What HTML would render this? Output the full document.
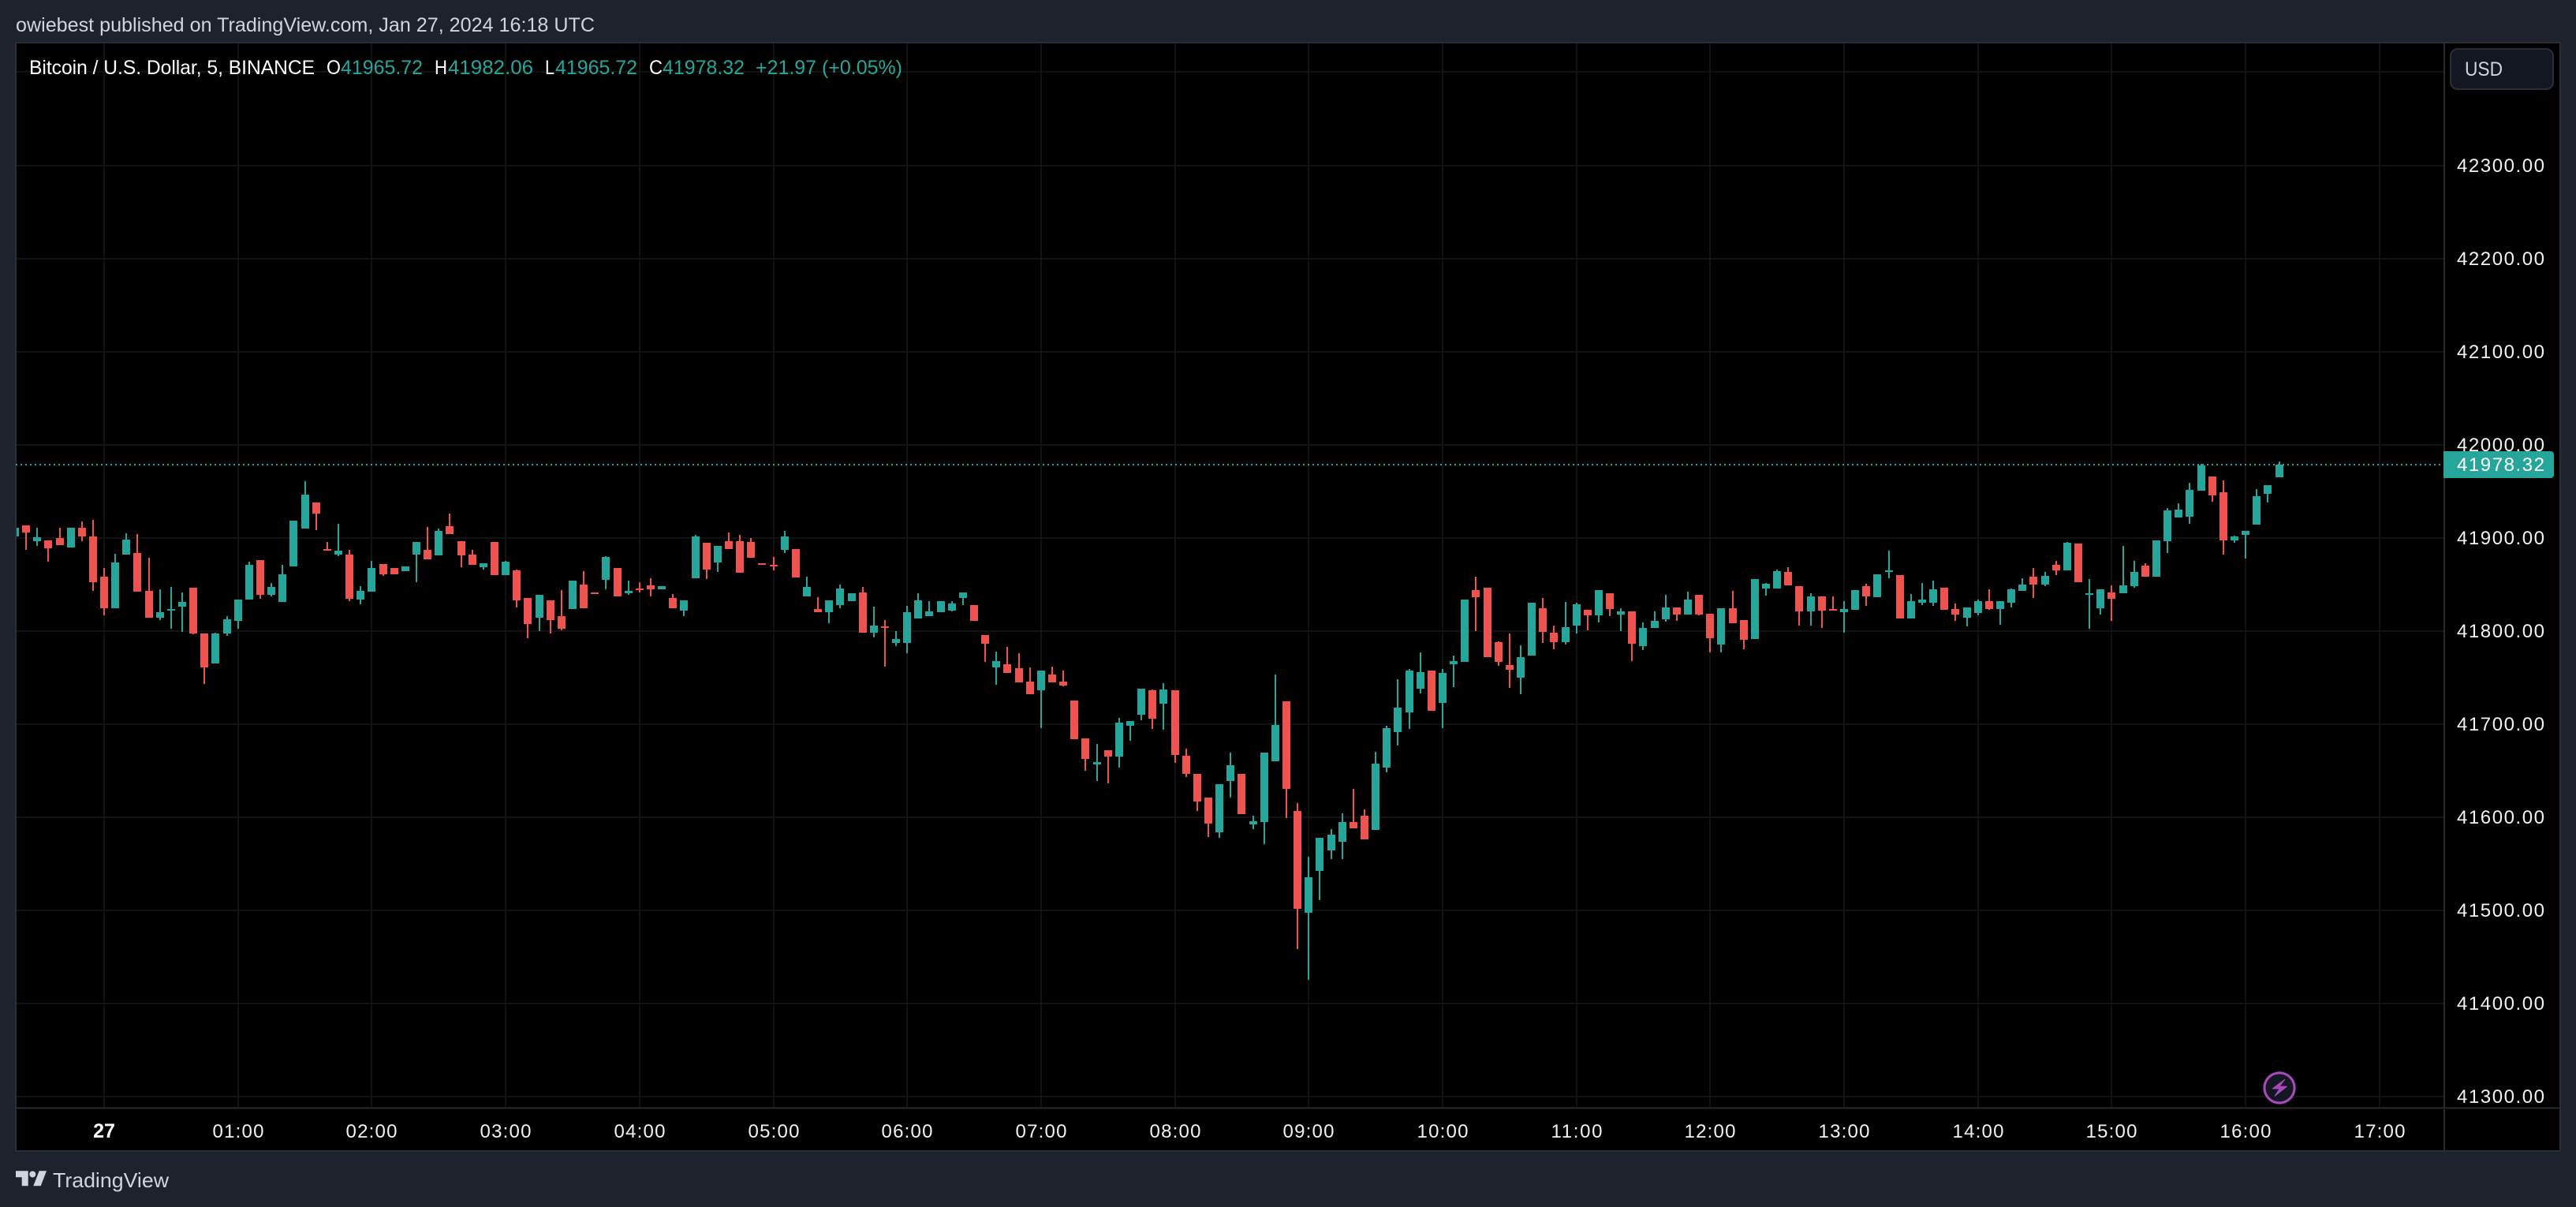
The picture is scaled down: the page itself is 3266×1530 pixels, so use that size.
<!DOCTYPE html>
<html>
<head>
<meta charset="utf-8">
<title>Bitcoin / U.S. Dollar</title>
<style>
html,body{margin:0;padding:0;background:#1e222d;width:3266px;height:1530px;overflow:hidden}
svg{display:block}
text{font-family:"Liberation Sans",sans-serif}
</style>
</head>
<body>
<svg xmlns="http://www.w3.org/2000/svg" width="3266" height="1530" viewBox="0 0 3266 1530">
<rect width="3266" height="1530" fill="#1e222d"/>
<rect x="20" y="54" width="3226" height="1405" fill="#000" stroke="#2a2e39" stroke-width="2"/>

<path shape-rendering="crispEdges" fill="none" stroke="#121212" stroke-width="2" d="M21 91H3098M21 210H3098M21 328H3098M21 446H3098M21 564H3098M21 682H3098M21 800H3098M21 918H3098M21 1036H3098M21 1154H3098M21 1272H3098M21 1390H3098M132 55V1403M302 55V1403M471 55V1403M641 55V1403M811 55V1403M981 55V1403M1150 55V1403M1320 55V1403M1490 55V1403M1659 55V1403M1829 55V1403M1999 55V1403M2168 55V1403M2338 55V1403M2508 55V1403M2677 55V1403M2847 55V1403M3017 55V1403"/>

<path shape-rendering="crispEdges" fill="none" stroke="#2a2a2a" stroke-width="2" d="M21 1404.500H3245M3099 55V1458"/>

<path shape-rendering="crispEdges" fill="none" stroke="#26a69a" stroke-width="2" stroke-dasharray="2 4" d="M20 589H3094"/>

<!-- red wicks -->
<path shape-rendering="crispEdges" fill="none" stroke="#ef5350" stroke-width="2" d="M33 666V697M61 685V712M76 669V691M104 661V686M118 659V749M132 720V780M174 677V750M189 707V783M245 745V804M259 803V867M330 710V759M401 637V672M415 687V698M443 697V762M486 715V730M542 668V709M570 651V677M585 686V719M599 697V716M655 722V770M669 758V809M698 761V803M712 748V799M740 724V771M811 738V751M825 733V756M853 753V771M896 688V734M924 675V696M938 678V726M952 682V707M981 706V723M1037 757V776M1094 744V802M1122 786V845M1249 805V839M1277 820V853M1292 828V865M1306 846V880M1334 845V865M1348 850V870M1376 936V977M1405 951V993M1461 874V924M1490 875V967M1504 949V985M1518 981V1028M1532 1011V1061M1631 889V1037M1645 1018V1203M1716 1000V1050M1730 1026V1064M1871 731V800M1900 813V844M1914 803V872M1956 758V815M1970 793V823M2013 773V799M2041 752V781M2069 775V838M2126 770V787M2154 754V780M2168 778V827M2197 749V790M2211 786V823M2267 719V742M2281 743V793M2310 756V796M2324 756V774M2366 740V768M2479 765V787M2522 747V773M2578 720V758M2607 711V729M2677 742V787M2720 714V731M2805 604V636M2819 609V703"/>
<!-- red bodies -->
<path shape-rendering="crispEdges" fill="none" stroke="#ef5350" stroke-width="10" d="M33 666V675M61 685V695M76 682V691M104 669V680M118 680V738M132 731V771M174 701V750M189 749V783M245 745V803M259 803V846M330 710V754M401 637V651M415 696V698M443 703V759M486 715V728M500 720V728M542 697V709M570 667V677M585 686V704M599 703V716M627 687V729M655 723V761M669 758V791M698 761V786M712 781V797M740 741V771M754 751V753M783 720V756M811 746V748M825 742V747M853 758V771M896 688V722M924 686V696M938 686V726M952 687V707M966 714V716M981 716V718M1009 696V732M1037 772V776M1094 751V802M1122 794V796M1235 767V787M1249 805V816M1277 842V853M1292 847V865M1306 864V880M1334 855V865M1348 864V869M1362 888V937M1376 936V962M1405 951V959M1461 875V911M1490 875V957M1504 958V981M1518 981V1016M1532 1011V1044M1574 981V1032M1631 889V1000M1645 1028V1152M1716 1042V1050M1730 1034V1064M1815 850V901M1871 748V757M1886 745V833M1900 814V839M1914 843V849M1956 771V801M1970 802V814M2013 773V780M2041 752V772M2069 775V816M2126 770V779M2154 754V779M2168 778V809M2197 771V790M2211 786V811M2267 725V742M2281 743V775M2310 756V774M2324 772V774M2366 743V756M2409 729V784M2465 745V773M2479 772V779M2522 762V772M2578 731V741M2607 716V723M2635 689V738M2677 751V759M2720 717V731M2805 604V628M2819 624V685"/>
<!-- teal wicks -->
<path shape-rendering="crispEdges" fill="none" stroke="#26a69a" stroke-width="2" d="M47 669V692M146 702V771M160 676V703M203 747V786M217 744V797M231 751V801M273 802V841M288 781V806M302 760V797M316 712V760M344 739V756M358 716V763M387 610V670M429 664V705M457 743V766M471 711V750M528 687V738M556 670V704M613 714V722M641 711V729M684 754V800M768 705V747M797 736V754M867 761V781M882 678V733M910 692V725M995 673V701M1023 731V756M1051 761V790M1065 741V771M1108 769V808M1136 800V819M1150 768V828M1164 752V784M1178 762V781M1207 762V775M1221 751V767M1263 826V868M1320 850V923M1391 943V990M1419 910V973M1433 914V939M1447 873V913M1475 866V925M1546 994V1062M1560 954V1011M1589 1034V1051M1603 954V1070M1617 855V965M1659 1086V1242M1673 1062V1141M1688 1051V1089M1702 1031V1089M1744 953V1052M1758 920V979M1772 861V945M1787 848V924M1801 827V879M1829 848V923M1843 831V871M1928 818V880M1985 763V817M1999 764V803M2027 748V789M2055 771V800M2083 789V824M2098 775V796M2112 754V788M2140 750V779M2182 771V827M2239 739V755M2253 722V746M2296 752V793M2338 762V802M2395 698V733M2423 753V784M2437 739V767M2451 736V768M2494 770V794M2508 760V780M2536 762V792M2550 746V770M2564 733V749M2593 725V743M2621 687V723M2649 734V797M2663 747V779M2692 692V752M2706 711V745M2748 644V701M2762 638V656M2776 612V664M2791 588V622M2833 679V688M2847 673V708M2861 620V665M2875 615V637M2890 585V605"/>
<!-- teal bodies -->
<path shape-rendering="crispEdges" fill="none" stroke="#26a69a" stroke-width="10" d="M47 681V686M90 669V694M146 713V771M160 684V703M203 776V783M217 772V774M231 763V769M273 803V841M288 785V803M302 760V787M316 716V760M344 744V754M358 728V763M372 660V718M387 627V670M429 698V703M457 749V760M471 720V750M514 718V724M528 687V703M556 673V704M613 714V719M641 712V729M684 754V783M726 736V772M768 706V735M797 749V752M839 743V747M867 761V774M882 680V733M910 692V713M995 680V697M1023 744V756M1051 761V776M1065 746V767M1080 752V762M1108 793V802M1136 810V815M1150 776V815M1164 761V784M1178 775V781M1193 762V776M1207 765V774M1221 751V758M1263 838V846M1320 850V875M1391 966V969M1419 916V959M1433 914V920M1447 873V906M1475 874V892M1546 994V1055M1560 970V990M1589 1041V1045M1603 954V1042M1617 919V965M1659 1112V1157M1673 1062V1104M1688 1058V1078M1702 1042V1067M1744 968V1052M1758 923V973M1772 897V928M1787 850V903M1801 852V873M1829 853V891M1843 838V842M1857 760V839M1928 833V859M1942 764V831M1985 795V814M1999 766V793M2027 748V780M2055 775V779M2083 796V819M2098 787V796M2112 770V785M2140 760V779M2182 771V817M2225 734V810M2239 740V746M2253 724V746M2296 756V775M2338 772V776M2352 748V773M2380 728V757M2395 723V725M2423 762V784M2437 760V764M2451 747V764M2494 770V783M2508 762V777M2536 762V772M2550 747V764M2564 741V749M2593 730V741M2621 688V723M2649 752V754M2663 747V771M2692 742V752M2706 725V743M2734 685V731M2748 647V686M2762 646V656M2776 621V655M2791 590V622M2833 680V685M2847 673V678M2861 629V665M2875 615V626M2890 589V605"/>
<rect x="21" y="669" width="3" height="11" fill="#26a69a"/>

<!-- header -->
<text x="20" y="40" font-size="25" fill="#d1d4dc" textLength="734" lengthAdjust="spacingAndGlyphs">owiebest published on TradingView.com, Jan 27, 2024 16:18 UTC</text>

<!-- legend -->
<g font-size="25">
<text x="37" y="94" fill="#fff" textLength="362" lengthAdjust="spacingAndGlyphs">Bitcoin / U.S. Dollar, 5, BINANCE</text>
<text x="414" y="94" fill="#fff" textLength="18" lengthAdjust="spacingAndGlyphs">O</text>
<text x="432" y="94" fill="#26a69a" textLength="104" lengthAdjust="spacingAndGlyphs">41965.72</text>
<text x="551" y="94" fill="#fff" textLength="16" lengthAdjust="spacingAndGlyphs">H</text>
<text x="568" y="94" fill="#26a69a" textLength="108" lengthAdjust="spacingAndGlyphs">41982.06</text>
<text x="691" y="94" fill="#fff" textLength="12" lengthAdjust="spacingAndGlyphs">L</text>
<text x="704" y="94" fill="#26a69a" textLength="104" lengthAdjust="spacingAndGlyphs">41965.72</text>
<text x="823" y="94" fill="#fff" textLength="17" lengthAdjust="spacingAndGlyphs">C</text>
<text x="840" y="94" fill="#26a69a" textLength="104" lengthAdjust="spacingAndGlyphs">41978.32</text>
<text x="958" y="94" fill="#26a69a" textLength="186" lengthAdjust="spacingAndGlyphs">+21.97 (+0.05%)</text>
</g>

<!-- USD button -->
<rect x="3107" y="62" width="130" height="51" rx="9" fill="#131722" stroke="#2a2e39" stroke-width="2"/>
<text x="3125" y="96" font-size="25" fill="#d1d4dc" textLength="48" lengthAdjust="spacingAndGlyphs">USD</text>

<!-- price axis labels -->
<g font-size="24" fill="#f2f2f2">
<text x="3115" y="218" textLength="111">42300.00</text>
<text x="3115" y="336" textLength="111">42200.00</text>
<text x="3115" y="454" textLength="111">42100.00</text>
<text x="3115" y="572" textLength="111">42000.00</text>
<text x="3115" y="690" textLength="111">41900.00</text>
<text x="3115" y="808" textLength="111">41800.00</text>
<text x="3115" y="926" textLength="111">41700.00</text>
<text x="3115" y="1044" textLength="111">41600.00</text>
<text x="3115" y="1162" textLength="111">41500.00</text>
<text x="3115" y="1280" textLength="111">41400.00</text>
<text x="3115" y="1398" textLength="111">41300.00</text>
</g>

<!-- last price tag -->
<path d="M3098 572H3234a4 4 0 0 1 4 4V602a4 4 0 0 1 -4 4H3098Z" fill="#26a69a"/>
<text x="3115" y="597" font-size="24" fill="#fff" textLength="111">41978.32</text>

<!-- time axis labels -->
<g font-size="24" fill="#f2f2f2" text-anchor="middle">
<text x="132" y="1442" font-weight="bold" font-size="25" fill="#fff">27</text>
<text x="302" y="1442" textLength="65">01:00</text>
<text x="471" y="1442" textLength="65">02:00</text>
<text x="641" y="1442" textLength="65">03:00</text>
<text x="811" y="1442" textLength="65">04:00</text>
<text x="981" y="1442" textLength="65">05:00</text>
<text x="1150" y="1442" textLength="65">06:00</text>
<text x="1320" y="1442" textLength="65">07:00</text>
<text x="1490" y="1442" textLength="65">08:00</text>
<text x="1659" y="1442" textLength="65">09:00</text>
<text x="1829" y="1442" textLength="65">10:00</text>
<text x="1999" y="1442" textLength="65">11:00</text>
<text x="2168" y="1442" textLength="65">12:00</text>
<text x="2338" y="1442" textLength="65">13:00</text>
<text x="2508" y="1442" textLength="65">14:00</text>
<text x="2677" y="1442" textLength="65">15:00</text>
<text x="2847" y="1442" textLength="65">16:00</text>
<text x="3017" y="1442" textLength="65">17:00</text>
</g>

<!-- lightning icon -->
<circle cx="2890" cy="1379" r="21" fill="#1e222d"/>
<circle cx="2890" cy="1379" r="19" fill="#131722" stroke="#ab47bc" stroke-width="3"/>
<path d="M2896.800 1368.300L2881.200 1380H2890.300L2884.100 1389.300L2899.300 1377.300H2889.900Z" fill="#ab47bc" stroke="#ab47bc" stroke-width="1" stroke-linejoin="round"/>

<!-- TradingView logo -->
<path d="M20 1484.300H35.700V1503.300H27.700V1492.300H20ZM49.700 1484.300H59L51.700 1503.300H42.300Z" fill="#d1d4dc"/>
<circle cx="41.300" cy="1488.500" r="4" fill="#d1d4dc"/>
<text x="67" y="1505" font-size="26" fill="#d1d4dc" textLength="147" lengthAdjust="spacingAndGlyphs">TradingView</text>
</svg>
</body>
</html>
